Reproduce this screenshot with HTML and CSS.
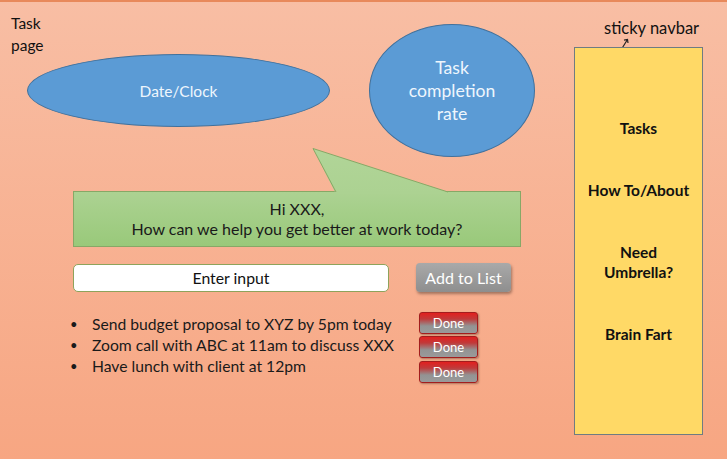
FILE: index.html
```html
<!DOCTYPE html>
<html lang="en">
    <head>
        <meta charset="utf-8" />
        <title>Task page</title>
        <link rel="stylesheet" href="styles.css">
    </head>

    <body>
        <div class="page">
            <div class="main">
                <div class="top">
                    <div class="title-col">
                        <div class="title">Task<br>page</div>
                        <div class="clock">Date/Clock</div>
                    </div>
                    <div class="rate">Task<br>completion<br>rate</div>
                </div>

                <!-- greeting bubble -->
                <div class="bubble">
                    <svg class="tail" width="137" height="46" viewBox="0 0 137 46">
                        <defs>
                            <linearGradient id="tailfill" x1="0" y1="0" x2="0" y2="1">
                                <stop offset="0" stop-color="#B1D598"/>
                                <stop offset="1" stop-color="#ACD292"/>
                            </linearGradient>
                        </defs>
                        <polygon points="1,0.5 24,44 136,44 136,46 24,46" fill="#ACD292"/>
                        <polygon points="1,0.5 24,44 136,44" fill="url(#tailfill)"/>
                        <polyline points="24,44 1,0.5 136,44" fill="none" stroke="#87A866" stroke-width="1"/>
                    </svg>
                    <p>Hi XXX,<br>How can we help you get better at work today?</p>
                </div>

                <div class="entry">
                    <div class="input">Enter input</div>
                    <div class="add-btn">Add to List</div>
                </div>

                <div class="tasks">
                    <ul class="task-list">
                        <li>Send budget proposal to XYZ by 5pm today</li>
                        <li>Zoom call with ABC at 11am to discuss XXX</li>
                        <li>Have lunch with client at 12pm</li>
                    </ul>
                    <div class="done-col">
                        <div class="done">Done</div>
                        <div class="done">Done</div>
                        <div class="done">Done</div>
                    </div>
                </div>
            </div>

            <div class="side">
                <div class="side-label">sticky navbar</div>
                <svg class="arrow" width="14" height="10" viewBox="0 0 14 10">
                    <path d="M3.5 9.5 L8.5 1.5 M5 2.2 L8.5 1.5 L9 5" fill="none" stroke="#222" stroke-width="1.2"/>
                </svg>
                <nav class="navbar">
                    <div class="nav-item">Tasks</div>
                    <div class="nav-item">How To/About</div>
                    <div class="nav-item">Need<br>Umbrella?</div>
                    <div class="nav-item">Brain Fart</div>
                </nav>
            </div>
        </div>
    </body>
</html>
```

FILE: styles.css
```css
html, body {
    height: 100%;
}
body {
    margin: 0;
    overflow: hidden;
    box-sizing: border-box;
    border-top: 2px solid #E8895B;
    background: linear-gradient(#F8BEA4, #F7A682);
    font-family: Lato, "Open Sans", sans-serif;
    color: #1A1A1A;
}
.page {
    display: grid;
    grid-template-columns: 574px 129px;
}

/* top shapes */
.top {
    display: flex;
    align-items: flex-start;
    height: 155px;
}
.title-col {
    padding: 10px 0 0 11px;
}
.title {
    font-size: 15.5px;
    line-height: 22px;
    color: #111;
}
.clock {
    width: 301px;
    height: 71px;
    margin: -2px 0 0 16px;
    border: 1px solid #41719C;
    border-radius: 50%;
    background-color: #5B9BD5;
    color: #EEF6FD;
    font-size: 15.5px;
    display: flex;
    align-items: center;
    justify-content: center;
}
.rate {
    width: 164px;
    height: 131px;
    margin: 22px 0 0 39px;
    border: 1px solid #41719C;
    border-radius: 50%;
    background-color: #5B9BD5;
    color: #EEF6FD;
    font-size: 17.6px;
    line-height: 23px;
    text-align: center;
    display: flex;
    align-items: center;
    justify-content: center;
}

/* speech bubble */
.bubble {
    position: relative;
    width: 446px;
    height: 54px;
    margin: 34px 0 0 73px;
    border: 1px solid #87A866;
    background: linear-gradient(#ACD292, #99C97A);
}
.tail {
    position: absolute;
    left: 238px;
    bottom: 100%;
    margin-bottom: -2px;
    display: block;
}
.bubble p {
    margin: 0;
    padding-top: 7px;
    text-align: center;
    font-size: 16px;
    line-height: 20px;
}

/* input row */
.entry {
    display: flex;
    align-items: center;
    gap: 27px;
    margin: 16px 0 0 73px;
}
.input {
    width: 314px;
    height: 26px;
    border: 1.5px solid #8EA35B;
    border-radius: 5px;
    background-color: #FFF;
    font-size: 15.8px;
    line-height: 26px;
    text-align: center;
    color: #111;
}
.add-btn {
    width: 95px;
    height: 29px;
    border-radius: 4px;
    background: linear-gradient(#A9A9A9, #8E8E8E);
    box-shadow: 1px 2px 3px rgba(0, 0, 0, 0.35);
    color: #FFF;
    font-size: 16px;
    line-height: 29px;
    text-align: center;
}

/* tasks */
.tasks {
    display: flex;
    margin: 21px 0 0 70px;
}
.task-list {
    list-style: none;
    margin: 1px 0 0;
    padding: 0;
    width: 349px;
    font-size: 15.7px;
    line-height: 21px;
}
.task-list li::before {
    content: "•";
    display: inline-block;
    width: 22px;
    font-size: 13px;
    vertical-align: top;
}
.done-col {
    display: flex;
    flex-direction: column;
    gap: 2px;
    margin-top: -1px;
}
.done {
    width: 57px;
    height: 20px;
    border: 1px solid #A31D1D;
    border-radius: 3px;
    background: linear-gradient(#E2201F, #C03A3A 30%, #939393 65%, #9A9A9A);
    box-shadow: 1px 1px 2px rgba(0, 0, 0, 0.3);
    color: #FFF;
    font-size: 13px;
    line-height: 20px;
    text-align: center;
}
.done:nth-child(3) {
    margin-top: 1px;
}

/* navbar */
.side {
    display: flex;
    flex-direction: column;
}
.side-label {
    margin: 16px 0 0 30px;
    font-size: 16.5px;
    line-height: 20px;
    white-space: nowrap;
    color: #111;
}
.arrow {
    display: block;
    margin: 0 0 -1px 45px;
}
.navbar {
    border: 1px solid #6F7C82;
    background-color: #FFD966;
    padding-top: 70px;
    box-sizing: border-box;
    height: 388px;
    display: flex;
    flex-direction: column;
    gap: 42px;
}
.nav-item {
    font-weight: bold;
    font-size: 15.5px;
    line-height: 20px;
    text-align: center;
    color: #111;
}
```
